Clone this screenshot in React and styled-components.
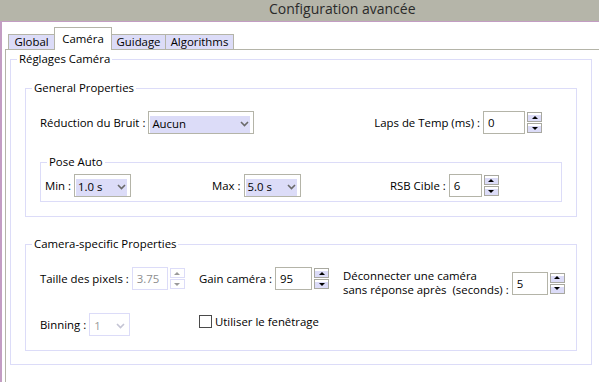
import React from 'react'
import styled, { createGlobalStyle } from 'styled-components'

const GlobalStyle = createGlobalStyle`
  html, body { margin: 0; padding: 0; background: #fff; }
  body {
    font-family: "Open Sans", "Noto Sans", sans-serif;
    font-size: 11.4px;
    color: #000;
  }
  * { box-sizing: border-box; }
`

const MAUVE = '#c39dc3'
const GRAY = '#b4b4a8'
const LAV = '#dcdcf8'

const Window = styled.div`
  width: 599px;
  height: 382px;
  overflow: hidden;
  display: flex;
  flex-direction: column;
  background: #fff;
`

const TitleBar = styled.div`
  height: 22px;
  flex-shrink: 0;
  background: #b5b5a9;
  border-bottom: 1px solid ${MAUVE};
  padding-left: 269px;
  font-size: 14px;
  line-height: 17px;
  color: #2a2a2a;
`

const Body = styled.div`
  flex: 1;
  display: flex;
  flex-direction: column;
  border-left: 2px solid ${MAUVE};
  padding: 5px 0 0 3px;
`

const TabStrip = styled.div`
  display: flex;
  align-items: flex-end;
  height: 23px;
  padding-left: 3px;
  margin-bottom: -1px;
  position: relative;
  z-index: 1;
`

const Tab = styled.div`
  width: ${p => p.$w}px;
  height: ${p => (p.$active ? 23 : 16)}px;
  margin-right: -1px;
  border: 1px solid ${GRAY};
  border-bottom: ${p => (p.$active ? 'none' : `1px solid ${GRAY}`)};
  background: ${p => (p.$active ? '#fff' : LAV)};
  display: flex;
  align-items: center;
  justify-content: center;
  padding-bottom: ${p => (p.$active ? 2 : 1)}px;
  position: relative;
  z-index: ${p => (p.$active ? 2 : 1)};
`

const Panel = styled.div`
  flex: 1;
  border-top: 1px solid ${GRAY};
  border-left: 1px solid ${GRAY};
  padding: 1px 7px 0 4px;
`

const Group = styled.fieldset`
  margin: 0;
  min-width: 0;
  border: 1px solid ${LAV};
  padding: 15px 14px 14px 14px;
`

const OuterGroup = styled(Group)`
  padding: 13px 14px 13px 14px;
`

const PoseGroup = styled(Group)`
  margin-top: 20px;
  padding: 4px 4px 4px 4px;
`

const CameraGroup = styled(Group)`
  margin-top: 19px;
`

const Legend = styled.legend`
  padding: 0 2px;
  margin-left: -8px;
  line-height: 16px;
`

const PoseLegend = styled(Legend)`
  margin-left: 2px;
`

const TopRow = styled.div`
  display: flex;
  align-items: center;
  justify-content: space-between;
  height: 23px;
  padding-right: 20px;
`

const PoseRow = styled.div`
  display: grid;
  grid-template-columns: 167px 178px auto;
  align-items: center;
  height: 23px;
`

const CameraGrid = styled.div`
  display: grid;
  grid-template-columns: 159px 144px auto;
  row-gap: 16px;
  align-items: start;
`

const Field = styled.div`
  display: flex;
  align-items: center;
  gap: 3px;
  margin-top: ${p => p.$top || 0}px;
`

const TwoLine = styled.div`
  line-height: 14px;
  white-space: pre;
`

const NumBox = styled.div`
  width: ${p => p.$w}px;
  height: 23px;
  border: 1px solid ${p => (p.$disabled ? LAV : GRAY)};
  padding-left: 4px;
  display: flex;
  align-items: center;
  color: ${p => (p.$disabled ? '#8e8e8e' : '#000')};
  background: #fff;
`

const SpinWrap = styled.div`
  display: flex;
  flex-direction: column;
  gap: 1px;
  margin-left: -1px;
`

const SpinBtn = styled.div`
  width: 15px;
  height: 10px;
  border: 1px solid ${p => (p.$disabled ? LAV : '#a8a8a0')};
  background: ${p => (p.$disabled ? '#fff' : `linear-gradient(#fff 0 2px, ${LAV} 2px)`)};
  display: flex;
  align-items: center;
  justify-content: center;
`

const Arrow = styled.span`
  width: 0;
  height: 0;
  border-left: 3px solid transparent;
  border-right: 3px solid transparent;
  ${p => (p.$down ? 'border-top' : 'border-bottom')}: 3px solid ${p => (p.$disabled ? '#9a9a9a' : '#000')};
`

const SelectBox = styled.div`
  width: ${p => p.$w}px;
  height: 23px;
  border: 1px solid ${p => (p.$disabled ? LAV : GRAY)};
  padding: 4px 3px 0 1px;
  display: flex;
  background: #fff;
`

const SelectFill = styled.div`
  flex: 1;
  display: flex;
  align-items: center;
  justify-content: space-between;
  padding: 0 1px 2px ${p => (p.$disabled ? 3 : 2)}px;
  background: ${p => (p.$disabled ? 'transparent' : LAV)};
  color: ${p => (p.$disabled ? '#9a9a9a' : '#000')};
`

const CheckRow = styled.label`
  display: flex;
  align-items: center;
  gap: 3px;
  height: 13px;
  margin-top: 2px;
`

const CheckBox = styled.span`
  width: 13px;
  height: 13px;
  border: 1px solid #4a4a4a;
  background: #fff;
`

const Spinner = ({ disabled }) => (
  <SpinWrap>
    <SpinBtn $disabled={disabled}><Arrow $disabled={disabled} /></SpinBtn>
    <SpinBtn $disabled={disabled}><Arrow $down $disabled={disabled} /></SpinBtn>
  </SpinWrap>
)

const NumInput = ({ value, w, disabled }) => (
  <>
    <NumBox $w={w} $disabled={disabled}>{value}</NumBox>
    <Spinner disabled={disabled} />
  </>
)

const Select = ({ value, w, disabled }) => (
  <SelectBox $w={w} $disabled={disabled}>
    <SelectFill $disabled={disabled}>
      <span>{value}</span>
      <svg width="9" height="6" viewBox="0 0 9 6">
        <polyline points="1,1 4.5,4.5 8,1" fill="none" stroke={disabled ? '#c4c4d4' : '#6a6a6a'} strokeWidth="1.6" />
      </svg>
    </SelectFill>
  </SelectBox>
)

export default function App() {
  return (
    <Window>
      <GlobalStyle />
      <TitleBar>Configuration avancée</TitleBar>
      <Body>
        <TabStrip>
          <Tab $w={47}>Global</Tab>
          <Tab $w={58} $active>Caméra</Tab>
          <Tab $w={55}>Guidage</Tab>
          <Tab $w={69}>Algorithms</Tab>
        </TabStrip>
        <Panel>
          <OuterGroup>
            <Legend>Réglages Caméra</Legend>
            <Group>
              <Legend>General Properties</Legend>
              <TopRow>
                <Field>
                  Réduction du Bruit :
                  <Select value="Aucun" w={106} />
                </Field>
                <Field>
                  Laps de Temp (ms) :
                  <NumInput value="0" w={42} />
                </Field>
              </TopRow>
              <PoseGroup>
                <PoseLegend>Pose Auto</PoseLegend>
                <PoseRow>
                  <Field>
                    Min :
                    <Select value="1.0 s" w={57} />
                  </Field>
                  <Field>
                    Max :
                    <Select value="5.0 s" w={57} />
                  </Field>
                  <Field>
                    RSB Cible :
                    <NumInput value="6" w={33} />
                  </Field>
                </PoseRow>
              </PoseGroup>
            </Group>
            <CameraGroup>
              <Legend>Camera-specific Properties</Legend>
              <CameraGrid>
                <Field>
                  Taille des pixels :
                  <NumInput value="3.75" w={36} disabled />
                </Field>
                <Field>
                  Gain caméra :
                  <NumInput value="95" w={37} />
                </Field>
                <Field $top={2}>
                  <TwoLine>{'Déconnecter une caméra\nsans réponse après  (seconds) :'}</TwoLine>
                  <NumInput value="5" w={36} />
                </Field>
                <Field>
                  Binning :
                  <Select value="1" w={41} disabled />
                </Field>
                <CheckRow>
                  <CheckBox />
                  Utiliser le fenêtrage
                </CheckRow>
              </CameraGrid>
            </CameraGroup>
          </OuterGroup>
        </Panel>
      </Body>
    </Window>
  )
}
